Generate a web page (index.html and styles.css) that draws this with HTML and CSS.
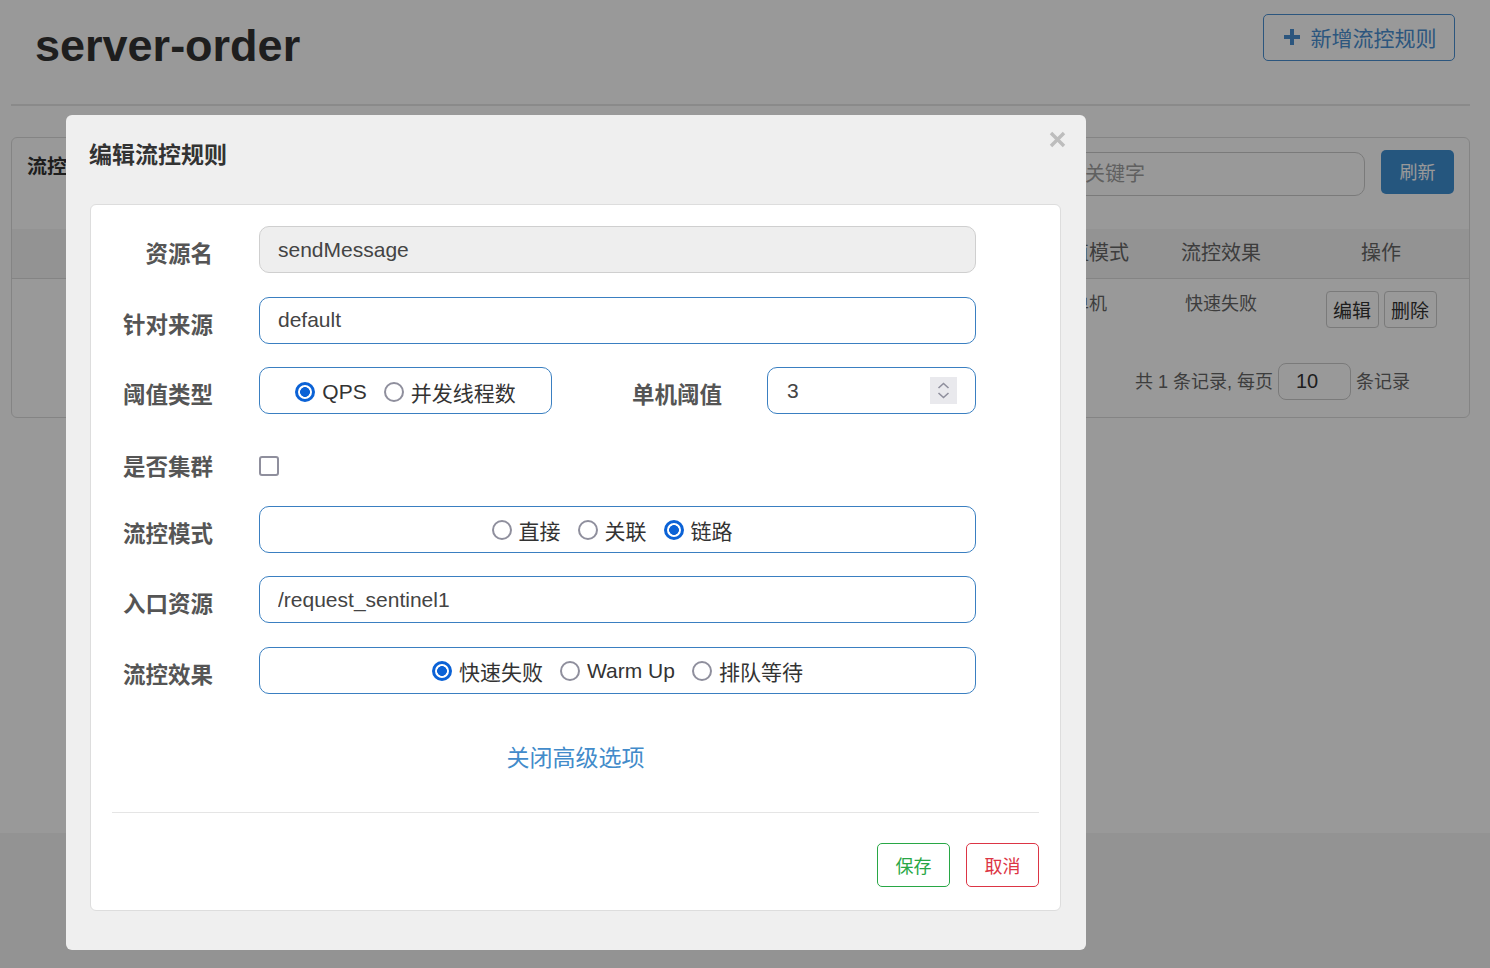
FILE: index.html
```html
<!DOCTYPE html>
<html lang="zh-CN">
<head>
<meta charset="utf-8">
<title>server-order</title>
<link rel="stylesheet" href="styles.css">
</head>
<body>
<div class="page">
  <div class="page-head">
    <h1 class="app-title">server-order</h1>
    <button class="btn-add" type="button">
      <svg class="plus" width="16" height="16" viewBox="0 0 16 16"><path d="M6 0h4v6h6v4h-6v6h-4v-6h-6v-4h6z" fill="currentColor"/></svg>
      新增流控规则
    </button>
  </div>
  <div class="page-rule"></div>

  <div class="card">
    <div class="card-head">
      <div class="card-title">流控规则</div>
      <div class="card-tools">
        <input class="search" type="text" placeholder="请输入关键字">
        <button class="btn-refresh" type="button">刷新</button>
      </div>
    </div>
    <div class="table">
      <div class="t-row t-head">
        <div>资源名</div><div>来源应用</div><div>流控模式</div><div>阈值类型</div><div>阈值</div><div>阈值模式</div><div>流控效果</div><div>操作</div>
      </div>
      <div class="t-row t-body">
        <div>sendMessage</div><div>default</div><div>链路</div><div>QPS</div><div>3</div><div>单机</div><div>快速失败</div>
        <div class="ops"><button class="btn-op" type="button">编辑</button><button class="btn-op" type="button">删除</button></div>
      </div>
    </div>
    <div class="pager">
      <span>共 1 条记录, 每页</span>
      <input class="pager-size" type="text" value="10">
      <span>条记录</span>
    </div>
  </div>
</div>

<div class="backdrop"></div>

<div class="modal">
  <div class="modal-head">
    <div class="modal-title">编辑流控规则</div>
    <svg class="modal-close" width="17" height="17" viewBox="0 0 17 17"><path d="M2 2L15 15M15 2L2 15" stroke="#bdbdbd" stroke-width="3.4" stroke-linecap="butt"/></svg>
  </div>
  <div class="panel">
    <div class="form">
      <div class="row">
        <label class="lbl">资源名</label>
        <input class="ctl ctl-readonly" type="text" value="sendMessage" readonly>
      </div>
      <div class="row">
        <label class="lbl">针对来源</label>
        <input class="ctl" type="text" value="default">
      </div>
      <div class="row">
        <label class="lbl">阈值类型</label>
        <div class="radio-box box-small">
          <label class="opt"><span class="radio checked"></span>QPS</label>
          <label class="opt"><span class="radio"></span>并发线程数</label>
        </div>
        <label class="lbl lbl-mid">单机阈值</label>
        <div class="num-box">
          <input class="num-input" type="text" value="3">
          <span class="spin">
            <svg width="27" height="27" viewBox="0 0 27 27"><path d="M8.5 11L13.5 6.5L18.5 11M8.5 16L13.5 20.5L18.5 16" fill="none" stroke="#8f8f9d" stroke-width="1.6"/></svg>
          </span>
        </div>
      </div>
      <div class="row row-check">
        <label class="lbl">是否集群</label>
        <span class="checkbox"></span>
      </div>
      <div class="row">
        <label class="lbl">流控模式</label>
        <div class="radio-box box-wide box-mode">
          <label class="opt"><span class="radio"></span>直接</label>
          <label class="opt"><span class="radio"></span>关联</label>
          <label class="opt"><span class="radio checked"></span>链路</label>
        </div>
      </div>
      <div class="row">
        <label class="lbl">入口资源</label>
        <input class="ctl" type="text" value="/request_sentinel1">
      </div>
      <div class="row">
        <label class="lbl">流控效果</label>
        <div class="radio-box box-wide">
          <label class="opt"><span class="radio checked"></span>快速失败</label>
          <label class="opt"><span class="radio"></span>Warm Up</label>
          <label class="opt"><span class="radio"></span>排队等待</label>
        </div>
      </div>
    </div>
    <div class="adv"><a class="adv-link" href="#">关闭高级选项</a></div>
    <div class="sep"></div>
    <div class="foot">
      <button class="btn-save" type="button">保存</button>
      <button class="btn-cancel" type="button">取消</button>
    </div>
  </div>
</div>
</body>
</html>
```

FILE: styles.css
```css
* { box-sizing: border-box; }

html, body {
  margin: 0;
  padding: 0;
}

body {
  background: #f5f5f5;
  font-family: "Liberation Sans", "Noto Sans CJK SC", sans-serif;
  color: #333;
  width: 1490px;
  height: 968px;
  overflow: hidden;
}

.page {
  background: #ffffff;
  height: 833px;
  padding: 0 20px 0 11px;
}

.page-head {
  height: 104px;
  display: flex;
  align-items: flex-start;
  justify-content: space-between;
  padding: 0 15px 0 24px;
}

.app-title {
  margin: 18px 0 0;
  font-size: 45px;
  line-height: 56px;
  font-weight: bold;
  color: #333;
}

.btn-add {
  margin-top: 14px;
  width: 192px;
  height: 47px;
  border: 1px solid #4a8fd2;
  border-radius: 5px;
  background: #fff;
  color: #4a8fd2;
  font-family: "Liberation Sans", "Noto Sans CJK SC", sans-serif;
  font-size: 21px;
  display: flex;
  align-items: center;
  justify-content: center;
  gap: 11px;
  padding: 0 0 2px 2px;
}

.plus { display: block; }

.page-rule {
  height: 2px;
  background: #e6e6e6;
}

.card {
  margin-top: 31px;
  border: 1px solid #ddd;
  border-radius: 6px;
  height: 281px;
}

.card-head {
  height: 91px;
  display: flex;
  justify-content: space-between;
  align-items: flex-start;
  padding: 0 15px 0 15px;
}

.card-title {
  margin-top: 16px;
  font-size: 20px;
  line-height: 26px;
  font-weight: bold;
  color: #333;
}

.card-tools {
  display: flex;
  gap: 16px;
  margin-top: 12px;
}

.search {
  width: 351px;
  height: 44px;
  margin-top: 2px;
  border: 1px solid #ccc;
  border-radius: 10px;
  padding: 0 12px 0 10px;
  font-family: "Liberation Sans", "Noto Sans CJK SC", sans-serif;
  font-size: 20px;
  background: #fff;
}

.search::placeholder { color: #a0a0a0; }

.btn-refresh {
  width: 73px;
  height: 44px;
  border: 0;
  border-radius: 5px;
  background: #3f8fd3;
  color: #fff;
  font-family: "Liberation Sans", "Noto Sans CJK SC", sans-serif;
  font-size: 18px;
  padding: 0 0 2px;
}

.table { width: 100%; }

.t-row {
  display: grid;
  grid-template-columns: 250px repeat(4, 1fr) 120px 144px 176px;
  align-items: center;
  text-align: center;
  color: #666;
}

.t-head {
  height: 50px;
  background: #f5f5f5;
  border-bottom: 1px solid #ddd;
  font-size: 20px;
  padding-bottom: 4px;
}

.t-body {
  height: 62px;
  font-size: 18px;
  align-items: start;
  padding-top: 10px;
}

.ops {
  display: flex;
  justify-content: center;
  gap: 5px;
  margin-top: 2px;
}

.btn-op {
  width: 53px;
  height: 37px;
  border: 1px solid #ccc;
  border-radius: 4px;
  background: #fff;
  color: #333;
  font-family: "Liberation Sans", "Noto Sans CJK SC", sans-serif;
  font-size: 19px;
  padding: 0;
}

.pager {
  display: flex;
  justify-content: flex-end;
  align-items: center;
  gap: 5px;
  padding: 22px 59px 0 0;
  font-size: 18px;
  color: #666;
}

.pager span { margin-top: -3px; }

.pager-size {
  width: 73px;
  height: 37px;
  border: 1px solid #ccc;
  border-radius: 8px;
  padding: 0 0 0 17px;
  font-family: "Liberation Sans", "Noto Sans CJK SC", sans-serif;
  font-size: 20px;
  color: #333;
}

/* overlay */
.backdrop {
  position: fixed;
  inset: 0;
  background: rgba(0, 0, 0, 0.4);
}

.modal {
  position: fixed;
  left: 66px;
  top: 115px;
  width: 1020px;
  height: 835px;
  background: #efefef;
  border-radius: 6px;
  padding: 0 25px 0 24px;
}

.modal-head {
  height: 89px;
  padding-top: 23px;
}

.modal-title {
  font-family: "Noto Sans CJK SC", sans-serif;
  font-size: 23px;
  line-height: 30px;
  font-weight: bold;
  color: #333;
  margin-left: -1px;
}

.modal-close {
  position: absolute;
  top: 16px;
  right: 20px;
}

.panel {
  background: #fff;
  border: 1px solid #ddd;
  border-radius: 6px;
  height: 707px;
  padding: 21px 21px 23px;
}

.form {
  display: flex;
  flex-direction: column;
  gap: 23.5px;
}

.row {
  display: flex;
  align-items: center;
  height: 47px;
}

.row-check {
  height: 44.5px;
  padding-top: 12px;
}

.lbl {
  width: 101px;
  flex: none;
  text-align: right;
  font-family: "Noto Sans CJK SC", sans-serif;
  font-size: 22.5px;
  font-weight: bold;
  color: #555;
  padding-top: 5px;
  margin-right: 46px;
  line-height: 30px;
}

.row-check .lbl { padding-top: 0; margin-top: -2px; }

.lbl-mid {
  width: 170px;
  margin-right: 45px;
}

.ctl {
  width: 717px;
  height: 47px;
  border: 1px solid #3a7fc1;
  border-radius: 10px;
  padding: 0 18px;
  font-family: "Liberation Sans", "Noto Sans CJK SC", sans-serif;
  font-size: 21px;
  color: #444;
  background: #fff;
  outline: none;
}

.ctl-readonly {
  background: #eeeeee;
  border-color: #cfcfcf;
}

.radio-box {
  height: 47px;
  border: 1px solid #3a7fc1;
  border-radius: 10px;
  display: flex;
  align-items: center;
  justify-content: center;
  gap: 17px;
  font-family: "Liberation Sans", "Noto Sans CJK SC", sans-serif;
  font-size: 21px;
  color: #333;
  padding-top: 2px;
}

.box-small { width: 293px; }
.box-wide { width: 717px; }
.box-mode { padding-right: 11px; }

.opt {
  display: flex;
  align-items: center;
  gap: 7px;
}

.radio {
  width: 20px;
  height: 20px;
  border-radius: 50%;
  border: 2px solid #8f8f9d;
  background: #fff;
  flex: none;
}

.radio.checked {
  border: 3px solid #0b62d6;
  background: radial-gradient(circle, #0b62d6 0 4.6px, #ffffff 5.2px);
}

.checkbox {
  width: 20px;
  height: 20px;
  border: 2px solid #8f8f9d;
  border-radius: 3px;
  background: #fff;
}

.num-box {
  width: 209px;
  height: 47px;
  border: 1px solid #3a7fc1;
  border-radius: 10px;
  display: flex;
  align-items: center;
  padding: 0 18px 0 19px;
}

.num-input {
  flex: 1;
  min-width: 0;
  border: 0;
  outline: none;
  padding: 0;
  font-family: "Liberation Sans", "Noto Sans CJK SC", sans-serif;
  font-size: 21px;
  color: #444;
  background: transparent;
}

.spin {
  width: 27px;
  height: 27px;
  background: #e9e9ed;
  display: block;
}

.spin svg { display: block; }

.adv {
  margin-top: 47px;
  height: 30px;
  text-align: center;
}

.adv-link {
  font-family: "Noto Sans CJK SC", sans-serif;
  font-size: 23px;
  line-height: 30px;
  color: #428bca;
  text-decoration: none;
}

.sep {
  margin-top: 41px;
  height: 1px;
  background: #e5e5e5;
}

.foot {
  margin-top: 30px;
  display: flex;
  justify-content: flex-end;
  gap: 16px;
}

.btn-save, .btn-cancel {
  width: 73px;
  height: 44px;
  border-radius: 5px;
  background: #fff;
  font-family: "Noto Sans CJK SC", sans-serif;
  font-size: 18px;
  padding: 0;
}

.btn-save {
  border: 1px solid #28a745;
  color: #28a745;
}

.btn-cancel {
  border: 1px solid #dc3545;
  color: #dc3545;
}
```
